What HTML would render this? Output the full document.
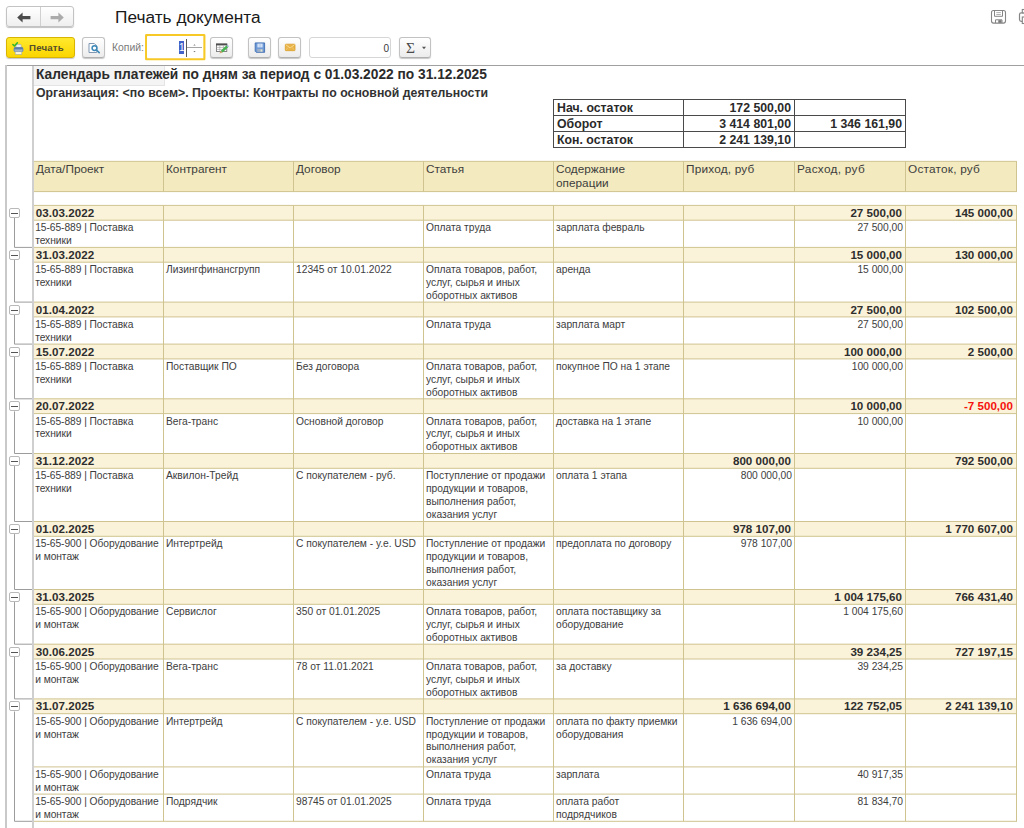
<!DOCTYPE html>
<html lang="ru">
<head>
<meta charset="utf-8">
<title>Печать документа</title>
<style>
*{box-sizing:border-box;margin:0;padding:0}
html,body{width:1024px;height:828px;overflow:hidden;background:#fff}
body{position:relative;font-family:"Liberation Sans",Arial,sans-serif;color:#333;font-size:11px}
.abs{position:absolute}
/* top bar */
.nav{position:absolute;left:6px;top:6px;width:68px;height:21px;border:1px solid #c3c3c3;border-radius:3px;background:linear-gradient(#fff,#efefef);box-shadow:0 1px 1px rgba(0,0,0,.25)}
.nav .sep{position:absolute;left:33px;top:0;width:1px;height:19px;background:#d0d0d0}
.title{position:absolute;left:115px;top:7px;font-size:17.3px;line-height:20px;color:#1a1a1a;white-space:nowrap}
.btn{position:absolute;top:37px;height:21px;border:1px solid #c2c2c2;border-bottom-color:#b0b0b0;border-radius:3px;background:linear-gradient(#fff,#ececec);box-shadow:0 1px 1px rgba(0,0,0,.22)}
.print{left:6px;width:69px;background:linear-gradient(#ffe92e,#fbd500);border-color:#d9b400;}
.print span{position:absolute;left:22px;top:3px;font-weight:bold;font-size:9.7px;letter-spacing:.18px;line-height:13px;color:#554e2c}
.lbl{position:absolute;left:112px;top:42px;font-size:10.4px;line-height:12px;color:#7a7a7a}
.spin{position:absolute;left:147px;top:37px;width:56px;height:20px;background:#fff}
.num{position:absolute;left:309px;top:37px;width:82px;height:21px;border:1px solid #d6d6d6;border-radius:3px;background:#fff;font-size:10px;line-height:22px;text-align:right;padding-right:1px;color:#3a3a3a;overflow:hidden}

.spin .s1{position:absolute;left:32px;top:4px;width:5px;height:13px;background:#4262c9;color:#fff;font-size:10px;line-height:13px;text-align:center;overflow:hidden}
.spin .s2{position:absolute;left:39px;top:2px;width:1px;height:18px;background:#5a5a5a}
.spin .s3{position:absolute;left:40px;top:10px;width:15px;height:1px;background:#a5a5a5}
.sig{position:absolute;left:6px;top:1px;font-family:"Liberation Serif",serif;font-size:15.5px;line-height:17px;color:#4a4a4a}
/* sheet */
.frameT{position:absolute;left:6px;top:65px;width:1018px;height:1px;background:#a0a0a0}
.frameL{position:absolute;left:5px;top:65px;width:2px;height:763px;background:#c9c9c9}
.gut{z-index:5;position:absolute;left:32px;top:66px;width:2px;height:762px;background:#cfcfcf}
.sel{position:absolute;left:34px;top:66px;width:131px;height:20px;background:#f4f4f4;border-right:1px solid #e4e4e4;border-bottom:1px solid #e4e4e4}
.h1{position:absolute;left:36px;top:67px;font-weight:bold;font-size:13.75px;line-height:16px;color:#2b2b2b;white-space:nowrap}
.h2{position:absolute;left:36px;top:86px;font-weight:bold;font-size:12.3px;line-height:14px;color:#333;white-space:nowrap}
/* summary */
.sum{position:absolute;left:553px;top:99px;width:353px;height:49px;border:1px solid #4a4a4a;font-weight:bold;font-size:12.3px;color:#2a2a2a}
.sum div{position:absolute;height:16px;line-height:16px;white-space:nowrap}
.sum .hz{left:0;width:351px;height:1px;background:#4a4a4a}
.sum .vt{top:0;width:1px;height:47px;background:#4a4a4a}
/* header */
.hdr{position:absolute;top:161px;height:31px;z-index:2}
.hdr div{position:absolute;top:0;height:31px;border:1px solid transparent;font-size:11.8px;line-height:14px;color:#3d3d3d;padding:0 0 0 2px}
/* rows */
.row{position:absolute;left:0;width:1024px;z-index:2}
.row .c{position:absolute;top:0;height:100%;padding:0 0 0 2px;font-size:10.25px;line-height:12.87px;color:#3d3d3d;white-space:nowrap;overflow:hidden}
.row .c.f{padding-left:1.2px}
.rr .c.f{letter-spacing:-.06px}
.row.dr .c.f{padding-left:1.8px;letter-spacing:.04px}
.row .c.n{text-align:right;padding:0 2px 0 0}
.dr .c{font-weight:bold;font-size:11.6px;line-height:14px;color:#2e2e2e;padding-left:2px}
.dr .c.n{padding-right:3px}
.neg{color:#f5120e}
/* tree */
.bx{z-index:3;position:absolute;left:9px;width:11px;height:10px;border:1px solid #b9b9b9;border-radius:2px;background:#fff}
.bx i{position:absolute;left:1px;top:4px;width:7px;height:1px;background:#555}
</style>
</head>
<body>
<!-- navigation -->
<div class="nav"><div class="sep"></div>
<svg class="abs" style="left:9px;top:5px" width="16" height="11" viewBox="0 0 16 11"><path d="M1.2 5.6 L6.6 0.6 L6.6 3.9 L14.4 3.9 L14.4 7.3 L6.6 7.3 L6.6 10.6 Z" fill="#4b4b4b"/></svg>
<svg class="abs" style="left:42px;top:5px" width="16" height="11" viewBox="0 0 16 11"><path d="M14.8 5.6 L9.4 0.6 L9.4 3.9 L1.6 3.9 L1.6 7.3 L9.4 7.3 L9.4 10.6 Z" fill="#ababab"/></svg>
</div>
<div class="title">Печать документа</div>
<svg class="abs" style="left:988px;top:8px" width="36" height="18" viewBox="0 0 36 18">
<rect x="3.5" y="2.5" width="14" height="12.6" rx="2" fill="#fff" stroke="#858585" stroke-width="1.1"/>
<path d="M6.5 2.5 V8.3 H14.5 V2.5" fill="none" stroke="#858585" stroke-width="1"/>
<path d="M8.3 4.6 H12.8 M8.3 6.5 H12.8" stroke="#8f8f8f" stroke-width="0.7"/>
<path d="M7.5 15 V11.8 H14 V15" fill="none" stroke="#858585" stroke-width="1"/>
<rect x="10.3" y="12.2" width="3.2" height="2.6" fill="#777"/>
<rect x="31.5" y="4.8" width="8" height="8.6" rx="1.8" fill="#fff" stroke="#858585" stroke-width="1.2"/>
<rect x="34.3" y="1.5" width="6" height="3.4" fill="#fff" stroke="#858585" stroke-width="1.1"/>
<rect x="34.3" y="9" width="6" height="6.5" fill="#fff" stroke="#858585" stroke-width="1.1"/>
</svg>
<!-- toolbar -->
<div class="btn print"><span>Печать</span>
<svg class="abs" style="left:4px;top:2px" width="16" height="16" viewBox="0 0 16 16">
<rect x="5" y="4.4" width="5.2" height="4" rx="1" fill="#e9edf1" stroke="#9aa7b4" stroke-width=".6"/>
<rect x="2.4" y="7.3" width="10.2" height="5" rx="2.4" fill="#7c98b8"/>
<rect x="2.8" y="7.3" width="9.4" height="2" rx="1" fill="#5d7da8"/>
<rect x="4" y="9.6" width="7" height="1.5" fill="#9fb3c9"/>
<rect x="4.2" y="11.8" width="6.6" height="2.6" fill="#fdf6d2" stroke="#8fa0b3" stroke-width=".5"/>
<path d="M1.9 4.5 L3.4 6 L6.4 2.8" fill="none" stroke="#2fb52f" stroke-width="1.6" stroke-linecap="round" stroke-linejoin="round"/>
</svg></div>
<div class="btn" style="left:82px;width:23px">
<svg class="abs" style="left:3px;top:2px" width="16" height="16" viewBox="0 0 16 16">
<path d="M3 3.5 H8.3 L10.8 6 V12.5 H3 Z" fill="#fdfdfd" stroke="#7f97b2" stroke-width="1"/>
<circle cx="8.5" cy="8.1" r="2.4" fill="#fff" stroke="#3b88b8" stroke-width="1.5"/>
<path d="M10.4 10 L13.2 12.6" stroke="#3b88b8" stroke-width="1.6" stroke-linecap="round"/>
</svg></div>
<div class="lbl">Копий:</div>
<svg class="abs" style="left:140px;top:30px" width="70" height="34" viewBox="0 0 70 34"><rect x="6.1" y="5.05" width="58.3" height="24.2" rx="0.3" fill="#fff" stroke="#f7c926" stroke-width="2.1"/></svg>
<div class="spin"><div class="s1">1</div><div class="s2"></div><div class="s3"></div>
<svg class="abs" style="left:44px;top:5px" width="7" height="12" viewBox="0 0 7 12"><path d="M2.3 3.4 L3.5 2.2 L4.7 3.4 Z M2.3 9 L3.5 10.2 L4.7 9 Z" fill="#777"/></svg>
</div>
<div class="btn" style="left:210px;width:23px">
<svg class="abs" style="left:3px;top:2px" width="18" height="16" viewBox="0 0 18 16">
<rect x="2.4" y="4" width="10.4" height="7.4" fill="#fff" stroke="#666" stroke-width=".8"/>
<rect x="2" y="3.6" width="11.2" height="1.8" fill="#4d4d4d"/>
<path d="M2.4 7.4 H12.8 M2.4 9.4 H12.8 M5.8 5.4 V11.4 M9.4 5.4 V11.4" stroke="#9a9a9a" stroke-width=".6"/>
<path d="M12.3 5.6 L14.1 7.3 L8.6 12.4 L6.8 10.7 Z" fill="#45b552"/>
<path d="M6.8 10.7 L8.6 12.4 L5.4 13.5 Z" fill="#c9a36b"/>
<path d="M12.3 5.6 L13.5 4.7 L15 6.2 L14.1 7.3 Z" fill="#9ab0cc"/>
</svg></div>
<div class="btn" style="left:248px;width:23px">
<svg class="abs" style="left:4px;top:3px" width="14" height="14" viewBox="0 0 14 14">
<path d="M2.2 1.9 H11.6 V11.3 H3.2 L2.2 10.3 Z" fill="#6f9ad8" stroke="#3f6db0" stroke-width=".9"/>
<rect x="4.4" y="2.6" width="5.2" height="3.8" fill="#d4e2f5"/>
<rect x="6.7" y="2.6" width=".7" height="3.8" fill="#9dbbe6"/>
<rect x="4.2" y="7.9" width="5.8" height="3" fill="#9fb0c6"/>
<rect x="7.6" y="8.5" width="1.6" height="2" fill="#dfe6d8"/>
</svg></div>
<div class="btn" style="left:278px;width:23px">
<svg class="abs" style="left:4px;top:4px" width="14" height="12" viewBox="0 0 14 12">
<rect x="2.3" y="2.2" width="9.7" height="6.5" rx=".6" fill="#e9b347" stroke="#d9a02c" stroke-width=".8"/>
<path d="M2.7 2.7 L7.15 5.9 L11.6 2.7" fill="none" stroke="#f7d88e" stroke-width="1"/>
<path d="M2.8 7.8 L5.6 5.3 M11.5 7.8 L8.7 5.3" fill="none" stroke="#f2c970" stroke-width=".8"/>
</svg></div>
<div class="num">0</div>
<div class="btn" style="left:399px;width:32px"><span class="sig">Σ</span>
<svg class="abs" style="left:21px;top:8px" width="6" height="4" viewBox="0 0 6 4"><path d="M1 .8 H5 L3 3.2 Z" fill="#555"/></svg>
</div>
<!-- sheet -->
<div class="frameT"></div><div class="frameL"></div><div class="gut"></div>
<div class="sel"></div>
<div class="h1">Календарь платежей по дням за период с 01.03.2022 по 31.12.2025</div>
<div class="h2">Организация: &lt;по всем&gt;. Проекты: Контракты по основной деятельности</div>
<div class="sum">
<div class="hz" style="top:15px"></div><div class="hz" style="top:31px"></div>
<div class="vt" style="left:129px"></div><div class="vt" style="left:240px"></div>
<div style="left:3px;top:0">Нач. остаток</div><div style="left:130px;width:107px;top:0;text-align:right">172 500,00</div>
<div style="left:3px;top:16px">Оборот</div><div style="left:130px;width:107px;top:16px;text-align:right">3 414 801,00</div><div style="left:241px;width:107px;top:16px;text-align:right">1 346 161,90</div>
<div style="left:3px;top:32px">Кон. остаток</div><div style="left:130px;width:107px;top:32px;text-align:right">2 241 139,10</div>
</div>
<div class="hdr">
<div style="left:33px;width:131px">Дата/Проект</div>
<div style="left:163px;width:131px">Контрагент</div>
<div style="left:293px;width:131px">Договор</div>
<div style="left:423px;width:131px">Статья</div>
<div style="left:553px;width:131px">Содержание<br>операции</div>
<div style="left:683px;width:112px;letter-spacing:.2px">Приход, руб</div>
<div style="left:794px;width:112px;letter-spacing:.3px">Расход, руб</div>
<div style="left:905px;width:112px;letter-spacing:.22px">Остаток, руб</div>
</div>
<svg class="abs" style="left:0;top:0;z-index:1" width="1024" height="828" viewBox="0 0 1024 828">
<rect x="34" y="161.35" width="983" height="30.25" fill="#f3eabf"/>
<path d="M34 161.35H1017" stroke="#cfc38f"/>
<path d="M34 191.60H1017" stroke="#cfc38f"/>
<path d="M163.5 161.35V191.6M293.5 161.35V191.6M423.5 161.35V191.6M553.5 161.35V191.6M683.5 161.35V191.6M794.5 161.35V191.6M905.5 161.35V191.6M1016.5 161.35V191.6" stroke="#cfc38f"/>
<rect x="34" y="205.40" width="983" height="14.80" fill="#fbf3d9"/>
<path d="M34 205.40H1017" stroke="#cfc38f"/>
<path d="M34 220.20H1017" stroke="#cfc38f"/>
<rect x="34" y="247.40" width="983" height="14.80" fill="#fbf3d9"/>
<path d="M34 247.40H1017" stroke="#cfc38f"/>
<path d="M34 262.20H1017" stroke="#cfc38f"/>
<rect x="34" y="302.10" width="983" height="14.80" fill="#fbf3d9"/>
<path d="M34 302.10H1017" stroke="#cfc38f"/>
<path d="M34 316.90H1017" stroke="#cfc38f"/>
<rect x="34" y="344.10" width="983" height="14.80" fill="#fbf3d9"/>
<path d="M34 344.10H1017" stroke="#cfc38f"/>
<path d="M34 358.90H1017" stroke="#cfc38f"/>
<rect x="34" y="398.80" width="983" height="14.80" fill="#fbf3d9"/>
<path d="M34 398.80H1017" stroke="#cfc38f"/>
<path d="M34 413.60H1017" stroke="#cfc38f"/>
<rect x="34" y="453.50" width="983" height="14.80" fill="#fbf3d9"/>
<path d="M34 453.50H1017" stroke="#cfc38f"/>
<path d="M34 468.30H1017" stroke="#cfc38f"/>
<rect x="34" y="521.50" width="983" height="14.80" fill="#fbf3d9"/>
<path d="M34 521.50H1017" stroke="#cfc38f"/>
<path d="M34 536.30H1017" stroke="#cfc38f"/>
<rect x="34" y="589.50" width="983" height="14.80" fill="#fbf3d9"/>
<path d="M34 589.50H1017" stroke="#cfc38f"/>
<path d="M34 604.30H1017" stroke="#cfc38f"/>
<rect x="34" y="644.20" width="983" height="14.80" fill="#fbf3d9"/>
<path d="M34 644.20H1017" stroke="#cfc38f"/>
<path d="M34 659.00H1017" stroke="#cfc38f"/>
<rect x="34" y="698.90" width="983" height="14.80" fill="#fbf3d9"/>
<path d="M34 698.90H1017" stroke="#cfc38f"/>
<path d="M34 713.70H1017" stroke="#cfc38f"/>
<path d="M34 766.90H1017" stroke="#cfc38f"/>
<path d="M34 794.10H1017" stroke="#cfc38f"/>
<path d="M34 821.30H1017" stroke="#cfc38f"/>
<path d="M163.5 205.40V821.30M293.5 205.40V821.30M423.5 205.40V821.30M553.5 205.40V821.30M683.5 205.40V821.30M794.5 205.40V821.30M905.5 205.40V821.30M1016.5 205.40V821.30" stroke="#cfc38f"/>
<path d="M14.5 218.00V247.40H33" stroke="#9c9c9c" fill="none"/>
<path d="M14.5 260.00V302.10H33" stroke="#9c9c9c" fill="none"/>
<path d="M14.5 314.70V344.10H33" stroke="#9c9c9c" fill="none"/>
<path d="M14.5 356.70V398.80H33" stroke="#9c9c9c" fill="none"/>
<path d="M14.5 411.40V453.50H33" stroke="#9c9c9c" fill="none"/>
<path d="M14.5 466.10V521.50H33" stroke="#9c9c9c" fill="none"/>
<path d="M14.5 534.10V589.50H33" stroke="#9c9c9c" fill="none"/>
<path d="M14.5 602.10V644.20H33" stroke="#9c9c9c" fill="none"/>
<path d="M14.5 656.80V698.90H33" stroke="#9c9c9c" fill="none"/>
<path d="M14.5 711.50V821.30H33" stroke="#9c9c9c" fill="none"/>
</svg>
<div class="row dr" style="top:205.80px;height:14.40px">
<div class="c f" style="left:34px;width:129px">03.03.2022</div>
<div class="c n" style="left:795px;width:110px">27 500,00</div>
<div class="c n" style="left:906px;width:110px">145 000,00</div>
</div>
<div class="row rr" style="top:222.20px;height:25.20px">
<div class="c f" style="left:34px;width:129px">15-65-889 | Поставка<br>техники</div>
<div class="c" style="left:424px;width:129px">Оплата труда</div>
<div class="c" style="left:554px;width:129px">зарплата февраль</div>
<div class="c n" style="left:795px;width:110px">27 500,00</div>
</div>
<div class="row dr" style="top:247.80px;height:14.40px">
<div class="c f" style="left:34px;width:129px">31.03.2022</div>
<div class="c n" style="left:795px;width:110px">15 000,00</div>
<div class="c n" style="left:906px;width:110px">130 000,00</div>
</div>
<div class="row rr" style="top:264.20px;height:37.90px">
<div class="c f" style="left:34px;width:129px">15-65-889 | Поставка<br>техники</div>
<div class="c" style="left:164px;width:129px">Лизингфинансгрупп</div>
<div class="c" style="left:294px;width:129px">12345 от 10.01.2022</div>
<div class="c" style="left:424px;width:129px">Оплата товаров, работ,<br>услуг, сырья и иных<br>оборотных активов</div>
<div class="c" style="left:554px;width:129px">аренда</div>
<div class="c n" style="left:795px;width:110px">15 000,00</div>
</div>
<div class="row dr" style="top:302.50px;height:14.40px">
<div class="c f" style="left:34px;width:129px">01.04.2022</div>
<div class="c n" style="left:795px;width:110px">27 500,00</div>
<div class="c n" style="left:906px;width:110px">102 500,00</div>
</div>
<div class="row rr" style="top:318.90px;height:25.20px">
<div class="c f" style="left:34px;width:129px">15-65-889 | Поставка<br>техники</div>
<div class="c" style="left:424px;width:129px">Оплата труда</div>
<div class="c" style="left:554px;width:129px">зарплата март</div>
<div class="c n" style="left:795px;width:110px">27 500,00</div>
</div>
<div class="row dr" style="top:344.50px;height:14.40px">
<div class="c f" style="left:34px;width:129px">15.07.2022</div>
<div class="c n" style="left:795px;width:110px">100 000,00</div>
<div class="c n" style="left:906px;width:110px">2 500,00</div>
</div>
<div class="row rr" style="top:360.90px;height:37.90px">
<div class="c f" style="left:34px;width:129px">15-65-889 | Поставка<br>техники</div>
<div class="c" style="left:164px;width:129px">Поставщик ПО</div>
<div class="c" style="left:294px;width:129px">Без договора</div>
<div class="c" style="left:424px;width:129px">Оплата товаров, работ,<br>услуг, сырья и иных<br>оборотных активов</div>
<div class="c" style="left:554px;width:129px">покупное ПО на 1 этапе</div>
<div class="c n" style="left:795px;width:110px">100 000,00</div>
</div>
<div class="row dr" style="top:399.20px;height:14.40px">
<div class="c f" style="left:34px;width:129px">20.07.2022</div>
<div class="c n" style="left:795px;width:110px">10 000,00</div>
<div class="c n" style="left:906px;width:110px"><span class=neg>-7 500,00</span></div>
</div>
<div class="row rr" style="top:415.60px;height:37.90px">
<div class="c f" style="left:34px;width:129px">15-65-889 | Поставка<br>техники</div>
<div class="c" style="left:164px;width:129px">Вега-транс</div>
<div class="c" style="left:294px;width:129px">Основной договор</div>
<div class="c" style="left:424px;width:129px">Оплата товаров, работ,<br>услуг, сырья и иных<br>оборотных активов</div>
<div class="c" style="left:554px;width:129px">доставка на 1 этапе</div>
<div class="c n" style="left:795px;width:110px">10 000,00</div>
</div>
<div class="row dr" style="top:453.90px;height:14.40px">
<div class="c f" style="left:34px;width:129px">31.12.2022</div>
<div class="c n" style="left:684px;width:110px">800 000,00</div>
<div class="c n" style="left:906px;width:110px">792 500,00</div>
</div>
<div class="row rr" style="top:470.30px;height:51.20px">
<div class="c f" style="left:34px;width:129px">15-65-889 | Поставка<br>техники</div>
<div class="c" style="left:164px;width:129px">Аквилон-Трейд</div>
<div class="c" style="left:294px;width:129px">С покупателем - руб.</div>
<div class="c" style="left:424px;width:129px">Поступление от продажи<br>продукции и товаров,<br>выполнения работ,<br>оказания услуг</div>
<div class="c" style="left:554px;width:129px">оплата 1 этапа</div>
<div class="c n" style="left:684px;width:110px">800 000,00</div>
</div>
<div class="row dr" style="top:521.90px;height:14.40px">
<div class="c f" style="left:34px;width:129px">01.02.2025</div>
<div class="c n" style="left:684px;width:110px">978 107,00</div>
<div class="c n" style="left:906px;width:110px">1 770 607,00</div>
</div>
<div class="row rr" style="top:538.30px;height:51.20px">
<div class="c f" style="left:34px;width:129px">15-65-900 | Оборудование<br>и монтаж</div>
<div class="c" style="left:164px;width:129px">Интертрейд</div>
<div class="c" style="left:294px;width:129px">С покупателем - у.е. USD</div>
<div class="c" style="left:424px;width:129px">Поступление от продажи<br>продукции и товаров,<br>выполнения работ,<br>оказания услуг</div>
<div class="c" style="left:554px;width:129px">предоплата по договору</div>
<div class="c n" style="left:684px;width:110px">978 107,00</div>
</div>
<div class="row dr" style="top:589.90px;height:14.40px">
<div class="c f" style="left:34px;width:129px">31.03.2025</div>
<div class="c n" style="left:795px;width:110px">1 004 175,60</div>
<div class="c n" style="left:906px;width:110px">766 431,40</div>
</div>
<div class="row rr" style="top:606.30px;height:37.90px">
<div class="c f" style="left:34px;width:129px">15-65-900 | Оборудование<br>и монтаж</div>
<div class="c" style="left:164px;width:129px">Сервислог</div>
<div class="c" style="left:294px;width:129px">350 от 01.01.2025</div>
<div class="c" style="left:424px;width:129px">Оплата товаров, работ,<br>услуг, сырья и иных<br>оборотных активов</div>
<div class="c" style="left:554px;width:129px">оплата поставщику за<br>оборудование</div>
<div class="c n" style="left:795px;width:110px">1 004 175,60</div>
</div>
<div class="row dr" style="top:644.60px;height:14.40px">
<div class="c f" style="left:34px;width:129px">30.06.2025</div>
<div class="c n" style="left:795px;width:110px">39 234,25</div>
<div class="c n" style="left:906px;width:110px">727 197,15</div>
</div>
<div class="row rr" style="top:661.00px;height:37.90px">
<div class="c f" style="left:34px;width:129px">15-65-900 | Оборудование<br>и монтаж</div>
<div class="c" style="left:164px;width:129px">Вега-транс</div>
<div class="c" style="left:294px;width:129px">78 от 11.01.2021</div>
<div class="c" style="left:424px;width:129px">Оплата товаров, работ,<br>услуг, сырья и иных<br>оборотных активов</div>
<div class="c" style="left:554px;width:129px">за доставку</div>
<div class="c n" style="left:795px;width:110px">39 234,25</div>
</div>
<div class="row dr" style="top:699.30px;height:14.40px">
<div class="c f" style="left:34px;width:129px">31.07.2025</div>
<div class="c n" style="left:684px;width:110px">1 636 694,00</div>
<div class="c n" style="left:795px;width:110px">122 752,05</div>
<div class="c n" style="left:906px;width:110px">2 241 139,10</div>
</div>
<div class="row rr" style="top:715.70px;height:51.20px">
<div class="c f" style="left:34px;width:129px">15-65-900 | Оборудование<br>и монтаж</div>
<div class="c" style="left:164px;width:129px">Интертрейд</div>
<div class="c" style="left:294px;width:129px">С покупателем - у.е. USD</div>
<div class="c" style="left:424px;width:129px">Поступление от продажи<br>продукции и товаров,<br>выполнения работ,<br>оказания услуг</div>
<div class="c" style="left:554px;width:129px">оплата по факту приемки<br>оборудования</div>
<div class="c n" style="left:684px;width:110px">1 636 694,00</div>
</div>
<div class="row rr" style="top:768.90px;height:25.20px">
<div class="c f" style="left:34px;width:129px">15-65-900 | Оборудование<br>и монтаж</div>
<div class="c" style="left:424px;width:129px">Оплата труда</div>
<div class="c" style="left:554px;width:129px">зарплата</div>
<div class="c n" style="left:795px;width:110px">40 917,35</div>
</div>
<div class="row rr" style="top:796.10px;height:25.20px">
<div class="c f" style="left:34px;width:129px">15-65-900 | Оборудование<br>и монтаж</div>
<div class="c" style="left:164px;width:129px">Подрядчик</div>
<div class="c" style="left:294px;width:129px">98745 от 01.01.2025</div>
<div class="c" style="left:424px;width:129px">Оплата труда</div>
<div class="c" style="left:554px;width:129px">оплата работ<br>подрядчиков</div>
<div class="c n" style="left:795px;width:110px">81 834,70</div>
</div>
<div class="bx" style="top:208px"><i></i></div>
<div class="bx" style="top:250px"><i></i></div>
<div class="bx" style="top:305px"><i></i></div>
<div class="bx" style="top:347px"><i></i></div>
<div class="bx" style="top:401px"><i></i></div>
<div class="bx" style="top:456px"><i></i></div>
<div class="bx" style="top:524px"><i></i></div>
<div class="bx" style="top:592px"><i></i></div>
<div class="bx" style="top:647px"><i></i></div>
<div class="bx" style="top:701px"><i></i></div></body></html>
